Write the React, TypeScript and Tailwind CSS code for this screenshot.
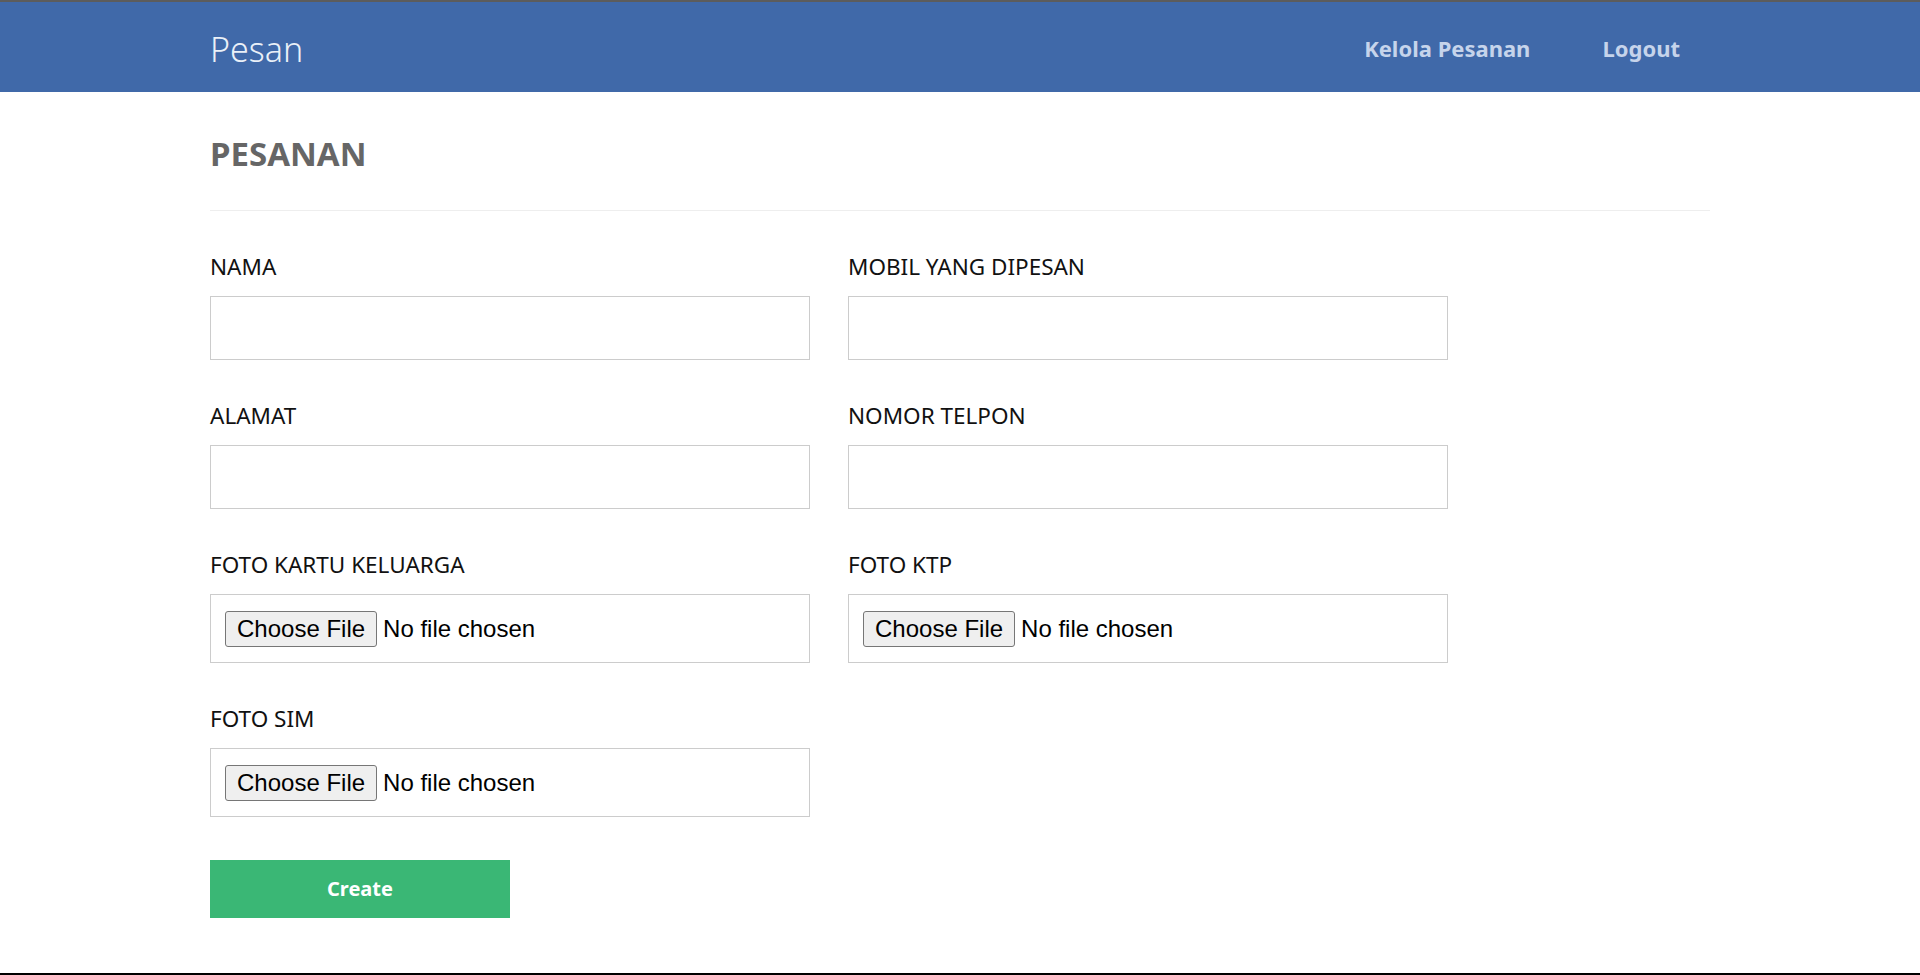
export default function App() {
  const fields = [
    { label: "NAMA", type: "text" },
    { label: "MOBIL YANG DIPESAN", type: "text" },
    { label: "ALAMAT", type: "text" },
    { label: "NOMOR TELPON", type: "text" },
    { label: "FOTO KARTU KELUARGA", type: "file" },
    { label: "FOTO KTP", type: "file" },
    { label: "FOTO SIM", type: "file" },
  ];

  return (
    <div className="h-[975px] flex flex-col bg-white font-['Noto_Sans',sans-serif]">
      <div className="h-[2px] bg-[#5c5c5c]" />
      <header className="h-[90px] bg-[#4069a9]">
        <div className="w-[1500px] mx-auto h-full flex items-center justify-between">
          <a className="text-[34px] font-light text-[#eaf0f8] leading-none mt-[4px]">Pesan</a>
          <nav className="flex items-center gap-[72px] pr-[30px] mt-[2px]">
            <a className="text-[22px] font-bold text-[#c6d4eb]">Kelola Pesanan</a>
            <a className="text-[22px] font-bold text-[#c6d4eb]">Logout</a>
          </nav>
        </div>
      </header>

      <main className="flex-1 w-[1500px] mx-auto pt-[42px]">
        <h1 className="text-[33px] leading-[40px] font-bold text-[#666666]">PESANAN</h1>
        <hr className="mt-[36px] mb-[41px] border-0 border-t border-[#eeeeee]" />

        <form className="grid grid-cols-[600px_600px] gap-x-[38px]">
          {fields.map((f) => (
            <div key={f.label} className="mb-[41px]">
              <label className="block text-[22.5px] leading-[30px] text-[#111111] mb-[14px]">
                {f.label}
              </label>
              {f.type === "file" ? (
                <div className="h-[69px] border border-[#cccccc] flex items-center px-[14px] gap-[6px] font-['Liberation_Sans',sans-serif] text-[24px] text-black">
                  <span className="h-[36px] px-[11px] flex items-center bg-[#efefef] border border-[#767676] rounded-[3px]">
                    Choose File
                  </span>
                  <span>No file chosen</span>
                </div>
              ) : (
                <input type="text" className="block w-full h-[64px] border border-[#cccccc] outline-none px-3" />
              )}
            </div>
          ))}
          <div />
        </form>

        <button className="mt-[2px] w-[300px] h-[58px] bg-[#3ab775] text-white text-[20px] font-bold">
          Create
        </button>
      </main>
      <div className="h-[2px] bg-black" />
    </div>
  );
}
